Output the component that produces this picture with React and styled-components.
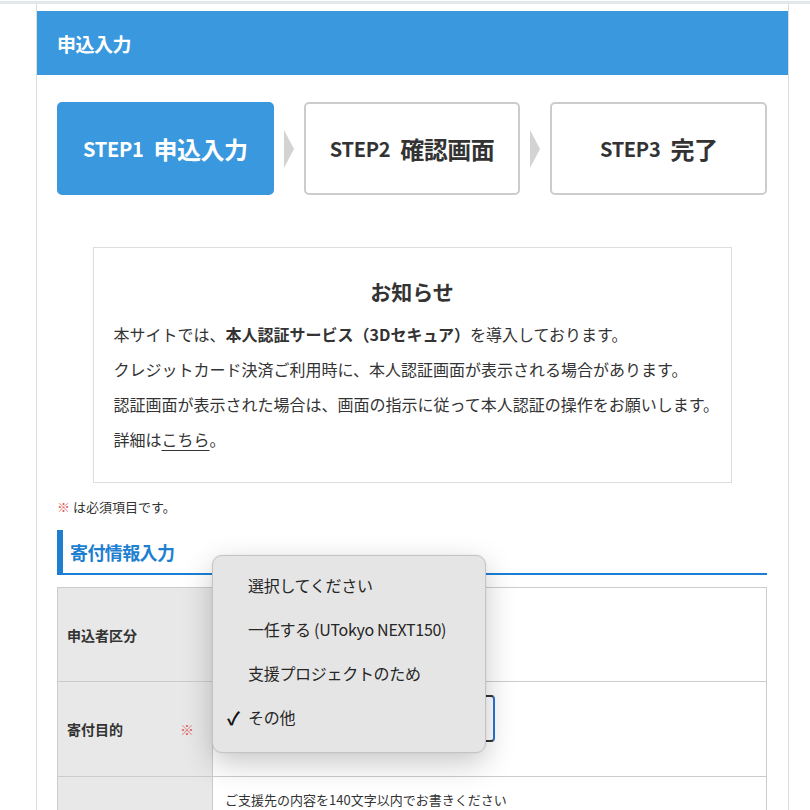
import * as React from 'react';
import styled, { createGlobalStyle } from 'styled-components';

const GlobalStyle = createGlobalStyle`
  html, body {
    margin: 0;
    padding: 0;
    background: #ffffff;
  }
  body {
    font-family: "Noto Sans CJK JP", "Noto Sans", sans-serif;
    color: #333333;
    overflow: hidden;
  }
`;

const steps = [
  { no: 'STEP1', label: '申込入力', active: true },
  { no: 'STEP2', label: '確認画面' },
  { no: 'STEP3', label: '完了' },
];

const options = [
  { label: '選択してください' },
  { label: '一任する (UTokyo NEXT150)' },
  { label: '支援プロジェクトのため' },
  { label: 'その他', checked: true },
];

const App = () => {
  return (
    <>
      <GlobalStyle />
      <Page>
        <TopRule />
        <Frame>
          <PageTitle>申込入力</PageTitle>
          <Body>
            <Steps>
              {steps.map((s, i) => (
                <React.Fragment key={s.no}>
                  {i > 0 && <StepArrow />}
                  <Step $active={s.active}>
                    <span className="step__no">{s.no}</span>
                    <span className="step__label">{s.label}</span>
                  </Step>
                </React.Fragment>
              ))}
            </Steps>

            <Notice>
              <h3 className="notice__title">お知らせ</h3>
              <p className="notice__text">
                本サイトでは、<strong>本人認証サービス（3Dセキュア）</strong>を導入しております。
                <br />
                クレジットカード決済ご利用時に、本人認証画面が表示される場合があります。
                <br />
                認証画面が表示された場合は、画面の指示に従って本人認証の操作をお願いします。
                <br />
                詳細は<a href="#">こちら</a>。
              </p>
            </Notice>

            <Required>
              <Mark>※</Mark> は必須項目です。
            </Required>

            <SectionTitle>寄付情報入力</SectionTitle>

            <FormTable>
              <Row $h={93}>
                <Label>申込者区分</Label>
                <Cell />
              </Row>
              <Row $h={94}>
                <Label>
                  寄付目的
                  <Mark>※</Mark>
                </Label>
                <Cell $top>
                  <SelectBox>
                    <Chevron viewBox="0 0 10 10">
                      <path d="M3 7 L6 3" stroke="#222" strokeWidth="1.4" fill="none" />
                    </Chevron>
                  </SelectBox>
                  <Popup>
                    {options.map((o) => (
                      <Option key={o.label}>
                        {o.checked && <Check>✓</Check>}
                        {o.label}
                      </Option>
                    ))}
                  </Popup>
                </Cell>
              </Row>
              <Row $h={60}>
                <Label />
                <Cell $top>
                  <Hint>ご支援先の内容を140文字以内でお書きください</Hint>
                </Cell>
              </Row>
            </FormTable>
          </Body>
        </Frame>
      </Page>
    </>
  );
};

export default App;

const Page = styled.div`
  padding-top: 1px;
  height: 810px;
  box-sizing: border-box;
`;

const TopRule = styled.div`
  height: 3px;
  background: #e1e9ea;
`;

const Frame = styled.div`
  margin-left: 36px;
  width: 753px;
  min-height: 820px;
  box-sizing: border-box;
  border-left: 1px solid #dddddd;
  border-right: 1px solid #dddddd;
  padding-top: 7px;
`;

const PageTitle = styled.h1`
  margin: 0;
  height: 64px;
  display: flex;
  align-items: center;
  padding-left: 20px;
  background: #3a98de;
  color: #ffffff;
  font-size: 19px;
  font-weight: 700;
  letter-spacing: -0.5px;
`;

const Body = styled.div`
  padding: 0 21px 0 20px;
`;

const Steps = styled.div`
  margin-top: 27px;
  display: grid;
  grid-template-columns: 1fr 30px 1fr 30px 1fr;
  align-items: center;
`;

const Step = styled.div`
  height: 93px;
  box-sizing: border-box;
  border-radius: 5px;
  display: flex;
  align-items: center;
  justify-content: center;
  gap: 10px;
  background: ${({ $active }) => ($active ? '#3a98de' : '#ffffff')};
  border: 2px solid ${({ $active }) => ($active ? '#3a98de' : '#cccccc')};
  color: ${({ $active }) => ($active ? '#ffffff' : '#333333')};
  font-weight: 700;
  .step__no {
    font-size: 20px;
    letter-spacing: -0.3px;
  }
  .step__label {
    font-size: 24px;
    letter-spacing: -0.5px;
  }
`;

const StepArrow = styled.div`
  justify-self: center;
  width: 0;
  height: 0;
  border-left: 10px solid #d3d3d3;
  border-top: 19px solid transparent;
  border-bottom: 19px solid transparent;
`;

const Notice = styled.section`
  width: 90%;
  margin: 52px auto 0;
  box-sizing: border-box;
  height: 236px;
  border: 1px solid #dddddd;
  padding: 28px 4px 0 20px;
  .notice__title {
    margin: 0;
    padding-right: 16px;
    text-align: center;
    font-size: 21px;
    line-height: 30px;
    font-weight: 700;
  }
  .notice__text {
    margin: 11px 0 0;
    font-size: 16px;
    line-height: 35px;
    white-space: nowrap;
  }
  strong {
    font-weight: 700;
  }
  a {
    color: #333333;
    text-decoration: underline;
    text-underline-offset: 4px;
  }
`;

const Required = styled.p`
  margin: 14px 0 0;
  font-size: 13px;
  line-height: 20px;
`;

const Mark = styled.span`
  color: #e06060;
  font-weight: 400;
`;

const SectionTitle = styled.h2`
  margin: 13px 0 0;
  height: 45px;
  box-sizing: border-box;
  display: flex;
  align-items: center;
  padding-left: 7px;
  border-left: 6px solid #1e7fd0;
  border-bottom: 2px solid #1a7fd4;
  color: #1e7fd0;
  font-size: 18px;
  font-weight: 700;
  letter-spacing: -0.6px;
`;

const FormTable = styled.div`
  margin-top: 12px;
  border: 1px solid #cccccc;
  border-bottom: none;
`;

const Row = styled.div`
  display: grid;
  grid-template-columns: 155px 1fr;
  height: ${({ $h }) => $h}px;
  & + & {
    border-top: 1px solid #cccccc;
  }
`;

const Label = styled.div`
  background: #e8e8e8;
  border-right: 1px solid #cccccc;
  display: flex;
  align-items: center;
  justify-content: space-between;
  padding: 0 18px 0 9px;
  font-size: 14px;
  font-weight: 700;
  color: #333333;
`;

const Cell = styled.div`
  position: relative;
  display: flex;
  align-items: ${({ $top }) => ($top ? 'flex-start' : 'center')};
  padding-left: 12px;
`;

const SelectBox = styled.div`
  position: relative;
  margin-top: 13px;
  width: 270px;
  height: 47px;
  box-sizing: border-box;
  border: 2px solid #333333;
  border-right-color: #2b73d6;
  border-radius: 4px;
`;

const Chevron = styled.svg`
  position: absolute;
  right: 4px;
  top: 16px;
  width: 10px;
  height: 10px;
`;

const Popup = styled.div`
  position: absolute;
  left: -1px;
  top: -127px;
  width: 274px;
  box-sizing: border-box;
  padding: 7px 0 13px;
  background: #e5e5e5;
  border: 1px solid #c4c4c4;
  border-radius: 10px;
  box-shadow: 0 10px 30px rgba(0, 0, 0, 0.22), 0 0 2px rgba(0, 0, 0, 0.1);
  z-index: 10;
`;

const Option = styled.div`
  position: relative;
  height: 44px;
  display: flex;
  align-items: center;
  padding-left: 35px;
  font-size: 16px;
  color: #262626;
  letter-spacing: -0.3px;
`;

const Check = styled.span`
  position: absolute;
  left: 14px;
  font-size: 18px;
  font-weight: 700;
  color: #111111;
`;

const Hint = styled.p`
  margin: 13px 0 0;
  font-size: 13px;
  color: #333333;
`;
